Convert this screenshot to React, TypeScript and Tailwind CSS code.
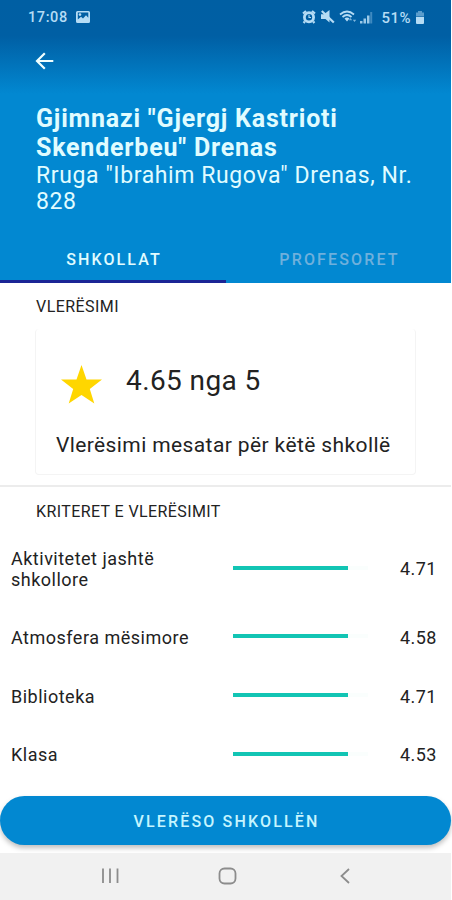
import React from 'react';

const criteria = [
  { label: 'Aktivitetet jashtë shkollore', score: '4.71', row: 'h-[85px] pt-[8px]' },
  { label: 'Atmosfera mësimore', score: '4.58', row: 'h-[60px]' },
  { label: 'Biblioteka', score: '4.71', row: 'h-[58px]' },
  { label: 'Klasa', score: '4.53', row: 'h-[59px]' },
];

function StatusBar() {
  return (
    <div className="flex h-[34px] items-center pr-[26px] pl-[28px] text-[#b5dcf5]">
      <span className="pt-[2px] text-[14.500px] leading-[16px] font-medium tracking-[0.600px]">17:08</span>
      <svg className="ml-[8px]" width="14" height="12" viewBox="0 0 14 12">
        <path fillRule="evenodd" fill="currentColor" d="M1.500 0h11A1.500 1.500 0 0 1 14 1.500v9a1.500 1.500 0 0 1-1.500 1.500h-11A1.500 1.500 0 0 1 0 10.500v-9A1.500 1.500 0 0 1 1.500 0ZM1.800 1.600v7L5 5.800l2 1.700 3-3.200 2.300 2.400V1.600Z" />
        <circle cx="4" cy="3.600" r="1.300" fill="currentColor" />
      </svg>
      <div className="ml-auto flex items-center">
        <svg width="14" height="14" viewBox="0 0 14 14">
          <path d="M1 3.500 4 1M13 3.500 10 1M2.800 11.500 1.600 13M11.200 11.500l1.200 1.500" stroke="currentColor" strokeWidth="2.200" />
          <circle cx="7" cy="7.300" r="4.600" fill="none" stroke="currentColor" strokeWidth="2.800" />
          <path d="M7 4.800v2.700h2" fill="none" stroke="currentColor" strokeWidth="1.100" />
        </svg>
        <svg className="ml-[5px]" width="14" height="14" viewBox="0 0 14 14">
          <path d="M0 4.300h3L8.500 0v12.500L4.500 9H0Z" fill="currentColor" />
          <path d="m.8 1 12 11.500" stroke="currentColor" strokeWidth="2.200" />
        </svg>
        <svg className="ml-[4px]" width="18" height="14" viewBox="0 0 18 14">
          <path d="M1 4.500Q8 -1.500 15 4.500M3.500 7Q8 3 12.500 7" fill="none" stroke="currentColor" strokeWidth="1.700" />
          <path d="M5.500 8.500Q8 6.500 10.500 8.500L8 11.500Z" fill="currentColor" />
          <path d="m11.500 8 1.700 2.200H9.800ZM15.500 12l1.700-2.200h-3.400Z" fill="currentColor" opacity=".7" />
        </svg>
        <svg className="ml-[3px]" width="13" height="13" viewBox="0 0 13 13">
          <path d="M0 10h2.500v2.500H0ZM3.500 7.500H6v5H3.500ZM7 4.500h2.500v8H7Z" fill="currentColor" opacity=".85" />
          <path d="M10.200 1h2v11.500h-2Z" fill="currentColor" opacity=".35" />
        </svg>
        <span className="ml-[8px] pt-px text-[15px] leading-[16px] font-medium tracking-[0.500px]">51%</span>
        <svg className="ml-[4px]" width="10" height="13" viewBox="0 0 10 13">
          <path d="M3 0h4v1.500h2v4H1v-4h2Z" fill="currentColor" opacity=".5" />
          <path d="M1 6h8v6a1 1 0 0 1-1 1H2a1 1 0 0 1-1-1Z" fill="currentColor" />
        </svg>
      </div>
    </div>
  );
}

function Header() {
  return (
    <header className="flex h-[283px] flex-col bg-[#0288d1] bg-[linear-gradient(180deg,#005fa3_0px,#005fa4_36px,#0288d1_94px)] text-[#e0fcff]">
      <StatusBar />
      <div className="flex h-[54px] items-center pl-[35px]">
        <svg width="20" height="20" viewBox="0 0 20 20" fill="none" stroke="#f0ffff" strokeWidth="2.200">
          <path d="M18.300 10H2.300M9.800 2.200 2 10l7.800 7.800" />
        </svg>
      </div>
      <div className="h-[147px] pt-[16px] pl-[36px]">
        <h1 className="text-[25px] leading-[29px] font-bold tracking-[0.790px] whitespace-nowrap">
          Gjimnazi "Gjergj Kastrioti<br />Skenderbeu" Drenas
        </h1>
        <p className="mt-px text-[23px] leading-[26px] tracking-[0.600px] whitespace-nowrap">
          Rruga "Ibrahim Rugova" Drenas, Nr.<br />828
        </p>
      </div>
      <nav className="flex h-[48px] text-center text-[16px] leading-[50px] font-medium">
        <div className="w-[226px] border-b-[3px] border-[#1b2595] pl-[2px] tracking-[2.100px]">SHKOLLAT</div>
        <div className="flex-1 pl-[2px] tracking-[2.150px] text-[#6fb0dc]">PROFESORET</div>
      </nav>
    </header>
  );
}

export default function App() {
  return (
    <div className="h-[900px] w-[452px] overflow-hidden bg-white pr-px font-[Roboto,sans-serif] text-[#222]">
      <Header />
      <section className="h-[204px] border-b-2 border-[#ececec] pt-[14px] pr-[35px] pl-[35px]">
        <h2 className="pl-px text-[16px] leading-[20px] tracking-[0.450px]">VLERËSIMI</h2>
        <div className="mt-[12px] h-[146px] rounded-[4px] border border-t-0 border-[#f4f4f4] pt-[30px] pl-[20px]">
          <div className="flex h-[44px] items-center">
            <svg className="mt-[8px] ml-[4px]" width="43" height="40" viewBox="0 0 43 40">
              <path d="m21.500 0 5 14.500H42L29.800 24 34.300 38.500 21.500 30 8.700 38.500 13.200 24 1 14.500h15.500Z" fill="#ffd600" />
            </svg>
            <strong className="ml-[23px] text-[28px] leading-[34px] font-normal tracking-[0.400px]">4.65 nga 5</strong>
          </div>
          <p className="mt-[29px] text-[21px] leading-[26px] tracking-[0.390px] whitespace-nowrap">Vlerësimi mesatar për këtë shkollë</p>
        </div>
      </section>
      <section className="h-[309px] pt-[15px]">
        <h2 className="pl-[36px] text-[16px] leading-[19px] tracking-[0.400px]">KRITERET E VLERËSIMIT</h2>
        <div>
          {criteria.map((item) => (
            <div key={item.label} className={`flex items-center pl-[11px] ${item.row}`}>
              <span className="mt-[2px] w-[222px] text-[18px] leading-[21px] tracking-[0.500px]">
                <span className="block w-[190px]">{item.label}</span>
              </span>
              <span className="h-[4px] w-[115px] bg-[#12c5b4]" />
              <span className="h-[4px] w-[20px] bg-[#fafefd]" />
              <span className="mt-[2px] ml-[32px] text-[18px] leading-[21px] tracking-[0.400px]">{item.score}</span>
            </div>
          ))}
        </div>
      </section>
      <div className="h-[57px]">
        <button className="block h-[49px] w-full rounded-full bg-[#0288d1] pt-[2px] pl-[2px] text-[16px] font-medium tracking-[2.150px] text-[#c5f5ff] shadow-[0_3px_5px_rgba(0,0,0,0.25)]">
          VLERËSO SHKOLLËN
        </button>
      </div>
      <footer className="flex h-[47px] items-center bg-[#f1f1f1]">
        <svg width="451" height="47" viewBox="0 0 451 47" fill="none" stroke="#8c8c8c" strokeWidth="1.800">
          <path d="M103 15.500v14.500M110 15.500v14.500M117.500 15.500v14.500" />
          <rect x="219.500" y="15.500" width="16" height="15" rx="5" />
          <path d="m349 16-7.500 7 7.500 7" />
        </svg>
      </footer>
    </div>
  );
}
